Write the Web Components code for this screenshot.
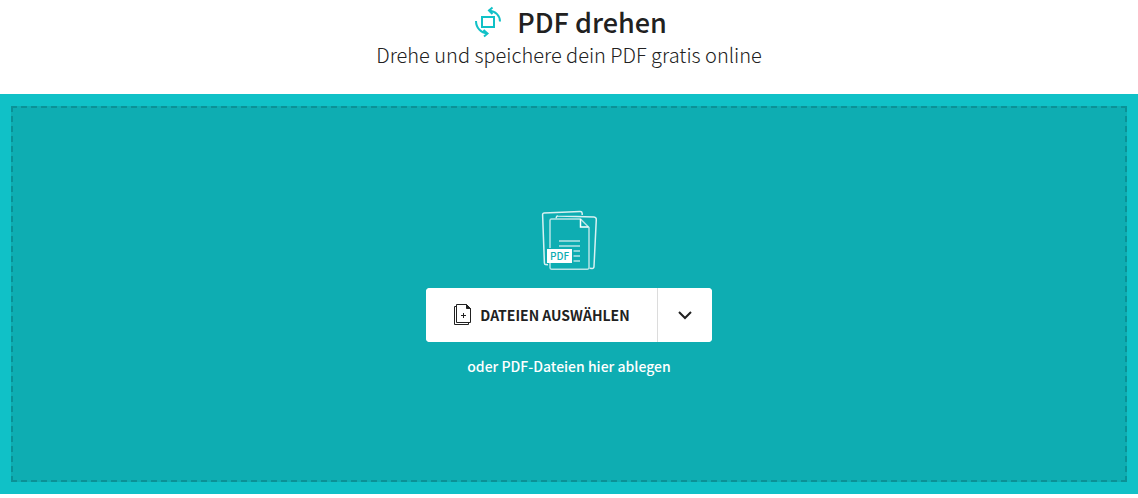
<!DOCTYPE html>
<html lang="de">
<head>
<meta charset="utf-8">
<meta name="viewport" content="width=device-width, initial-scale=1">
<title>PDF drehen</title>
<style>
  body { margin: 0; background: #fff; color: #212121; font-family: "Noto Sans CJK SC", "Noto Sans", sans-serif; }
</style>
</head>
<body>
<tool-page>
  <tool-header slot="header">
    <rotate-icon slot="icon"></rotate-icon>
    <span slot="title">PDF drehen</span>
    <span slot="subtitle">Drehe und speichere dein PDF gratis online</span>
  </tool-header>
  <drop-zone>
    <pdf-stack-icon slot="icon"></pdf-stack-icon>
    <file-picker>Dateien auswählen</file-picker>
    <span slot="hint">oder PDF-Dateien hier ablegen</span>
  </drop-zone>
</tool-page>
<script>
class BaseElement extends HTMLElement {
  constructor() {
    super();
    this.attachShadow({ mode: "open" }).innerHTML = this.constructor.markup;
  }
}

class ToolPage extends BaseElement {
  static markup = `
    <style>
      :host { display: flex; flex-direction: column; min-height: 100vh; box-sizing: border-box; padding-bottom: 4px; }
      main { flex: 1; display: grid; }
    </style>
    <slot name="header"></slot>
    <main><slot></slot></main>`;
}

class ToolHeader extends BaseElement {
  static markup = `
    <style>
      :host { display: block; padding: 4px 16px 24px; text-align: center; }
      .row { display: flex; justify-content: center; align-items: center; gap: 14px; }
      h1 { margin: 0; font-size: 27px; line-height: 36px; font-weight: 500; }
      p { margin: 0; font-size: 20px; line-height: 30px; font-weight: 200; }
    </style>
    <header>
      <div class="row"><slot name="icon"></slot><h1><slot name="title"></slot></h1></div>
      <p><slot name="subtitle"></slot></p>
    </header>`;
}

class RotateIcon extends BaseElement {
  static markup = `
    <style>:host { display: block; } svg { display: block; }</style>
    <svg width="32" height="32" viewBox="-1 0 32 32" fill="none" stroke="#10c1c7" stroke-width="2" aria-hidden="true">
      <rect x="10" y="11" width="12" height="10"/>
      <path d="M16.500 4.500C24 5 28 10 28 15.500M20.500 1.500l-3.500 3 3.500 3.500"/>
      <path d="M4 15C4 22 9 27 15.500 27.500M11.500 24l4 3.500-3.500 3"/>
    </svg>`;
}

class DropZone extends BaseElement {
  static markup = `
    <style>
      :host { display: grid; padding: 12px 11px; background: #10c1c7; color: #fff; }
      section { display: flex; flex-direction: column; align-items: center; justify-content: center; box-sizing: border-box; border: 2px dashed #0b9196; background: #0eadb2; }
      p { margin: 12px 0 0; font-size: 14px; line-height: 24px; font-weight: 500; }
      .picker { margin-top: 18px; }
    </style>
    <section>
      <slot name="icon"></slot>
      <div class="picker"><slot></slot></div>
      <p><slot name="hint"></slot></p>
    </section>`;
}

class PdfStackIcon extends BaseElement {
  static markup = `
    <style>
      :host { display: block; } svg { display: block; }
      text { font: 500 10px "Noto Sans CJK SC", sans-serif; }
    </style>
    <svg width="56" height="60" viewBox="0 0 56 60" fill="none" stroke="#b5e4e6" stroke-width="1.500" aria-hidden="true">
      <path stroke="#d8f1f2" d="M7 54.800L4.500 54.600Q3.500 54.500 3.400 53L1.600 4.500Q1.600 3 3 2.900L39 1.600Q41 1.500 41.200 3.300V5"/>
      <path stroke="#d8f1f2" d="M15.300 8.500V7.300Q15.400 5.800 17 5.900L53 7.100Q55.400 7.300 55.300 9.500L53 56.500Q52.900 58.500 51 58.400L48.500 58.300"/>
      <path d="M9 38V10.500Q9 9 10.500 9H39.500L48 17.500V57.500Q48 59.200 46.500 59.200H10.500Q9 59.200 9 57.500V52"/>
      <path stroke="#fff" d="M39.500 9V17H47.500"/>
      <path d="M18 31H39M18 36H39M32.500 41H39M32.500 46H39M32.500 51H39"/>
      <rect x="6" y="39" width="25" height="14" fill="#fff" stroke="none"/>
      <text x="18.500" y="50" text-anchor="middle" fill="#0eadb2" stroke="none">PDF</text>
    </svg>`;
}

class FilePicker extends BaseElement {
  static markup = `
    <style>
      :host { display: flex; height: 54px; border-radius: 4px; overflow: hidden; background: #fff; }
      button { display: flex; align-items: center; justify-content: center; margin: 0; padding: 0; border: 0; background: #fff; color: #212121; font: inherit; cursor: pointer; }
      .choose { gap: 8px; padding: 0 27px 0 26px; font-size: 14px; line-height: 24px; font-weight: 700; text-transform: uppercase; }
      .more { width: 55px; border-left: 1px solid #dcdcdc; }
      svg { display: block; }
    </style>
    <button class="choose" type="button">
      <svg width="20" height="24" viewBox="0 0 20 24" fill="none" stroke="#212121" aria-hidden="true">
        <path d="M4.500 1.500H14.500L18.500 5.500V19.500H4.500ZM4.500 3.500H2.500V21.500H16.500V19.500M9 12.500H14M11.500 10V15"/>
        <path d="M14.500 1.500V5.500H18.500Z" fill="#212121"/>
      </svg>
      <span><slot></slot></span>
    </button>
    <button class="more" type="button" aria-label="Weitere Quellen" aria-haspopup="menu">
      <svg width="16" height="16" viewBox="0 0 16 16" fill="none" stroke="#212121" stroke-width="2" aria-hidden="true"><path d="M2 5L8 11L14 5"/></svg>
    </button>`;
}

customElements.define("tool-page", ToolPage);
customElements.define("tool-header", ToolHeader);
customElements.define("rotate-icon", RotateIcon);
customElements.define("drop-zone", DropZone);
customElements.define("pdf-stack-icon", PdfStackIcon);
customElements.define("file-picker", FilePicker);
</script>
</body>
</html>
